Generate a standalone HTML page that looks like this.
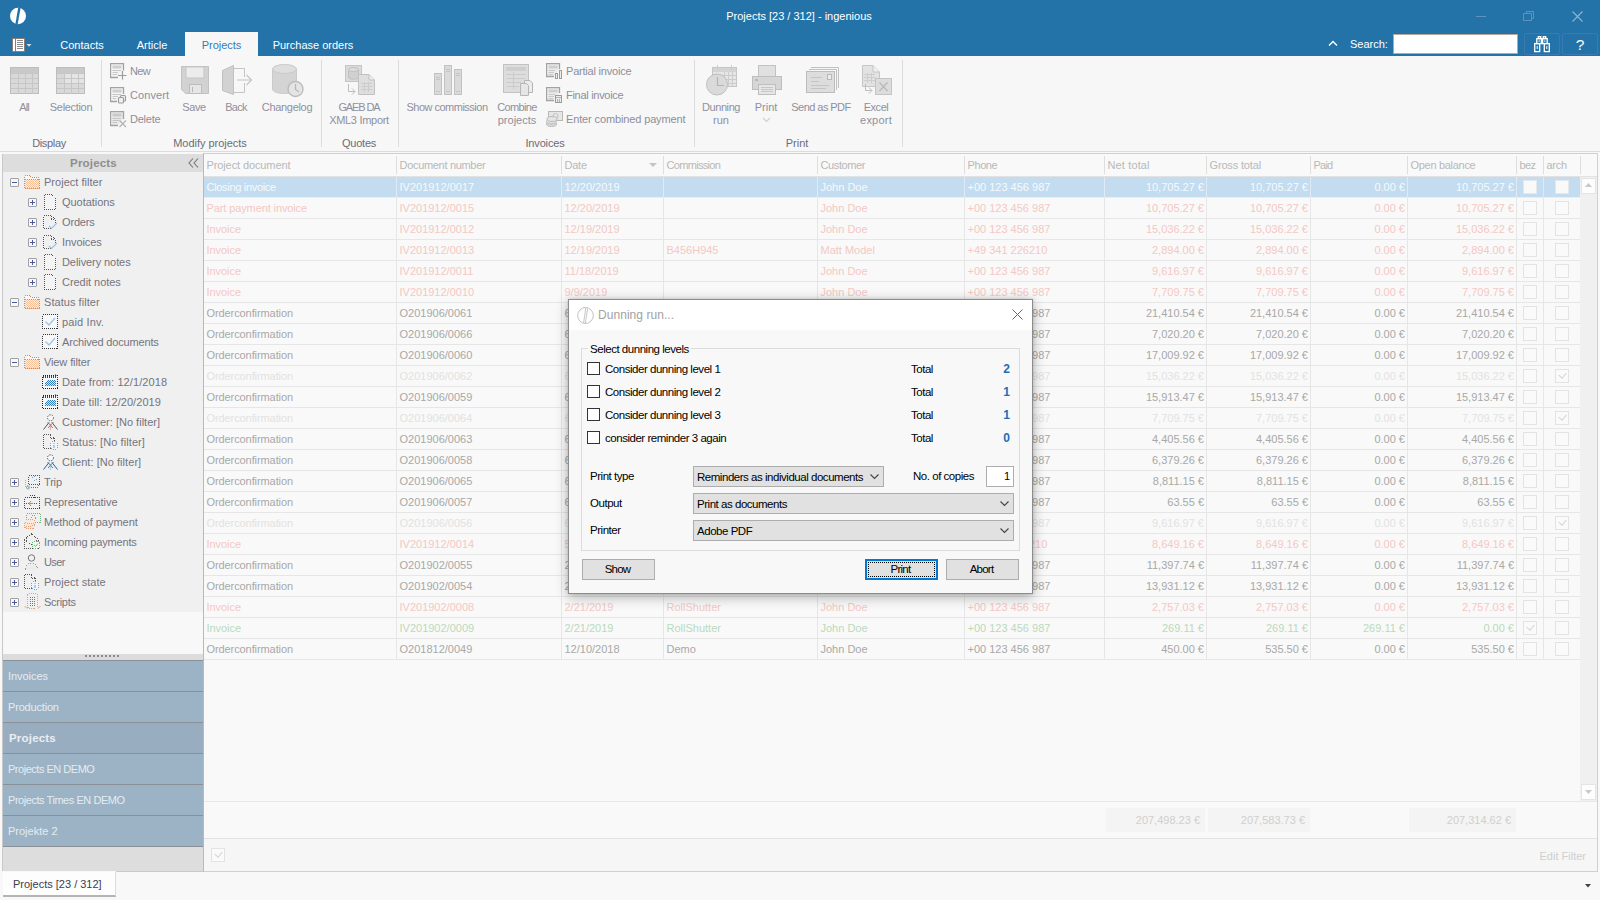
<!DOCTYPE html>
<html><head><meta charset="utf-8"><title>Projects [23 / 312] - ingenious</title>
<style>
*{box-sizing:border-box;margin:0;padding:0}
html,body{width:1600px;height:900px;overflow:hidden;background:#f8f8f8;font-family:"Liberation Sans",sans-serif;font-size:11px;color:#a8a8a8}
.abs{position:absolute}
#top{position:absolute;left:0;top:0;width:1600px;height:56px;background:#2373a9}
#title{position:absolute;left:-1px;width:1600px;top:9px;text-align:center;color:#fff;font-size:11px;line-height:14px;padding-left:-4px}
.tab{position:absolute;top:32px;height:24px;line-height:27px;color:#fff;font-size:11px;text-align:center}
.tab.sel{background:#f7f7f7;color:#2f7cc0}
#ribbon{position:absolute;left:0;top:56px;width:1600px;height:96px;background:#f7f7f7;border-bottom:1px solid #dcdcdc}
.rsep{position:absolute;top:4px;width:1px;height:87px;background:#dcdcdc}
.rlab{position:absolute;top:80px;height:14px;line-height:14px;text-align:center;color:#6c6c78;font-size:11px;white-space:nowrap}
.btxt{position:absolute;text-align:center;color:#90909c;font-size:11px;line-height:13px;white-space:nowrap}
.stxt{position:absolute;color:#8e8e9a;font-size:11px;line-height:13px;white-space:nowrap}
.ico{position:absolute}
#left{position:absolute;left:3px;top:153px;width:200px;height:718px;background:#f8f8f8}
#lbord{position:absolute;left:2px;top:154px;width:1px;height:717px;background:#c8c8c8}
#lhead{position:absolute;left:0;top:1px;width:200px;height:18px;background:#dddddd;color:#8e8e8e;font-weight:bold;font-size:11.5px;line-height:18px;text-align:center;padding-right:19px}
#tree{position:absolute;left:0;top:19px;width:200px;height:440px;background:#f0f0f0}
.ti{position:absolute;left:0;width:200px;height:20px;line-height:20px;color:#74747e;font-size:11px;white-space:nowrap}
.ti span{position:absolute;top:0}
.bx{position:absolute;width:9px;height:9px;border:1px solid #a2a2a6;background:#f8f8f8;border-radius:1px}
.bx:before{content:"";position:absolute;left:1px;top:3px;width:5px;height:1px;background:#4a5aa0}
.bx.p:after{content:"";position:absolute;left:3px;top:1px;width:1px;height:5px;background:#4a5aa0}
.nav{position:absolute;left:0;width:200px;height:31px;background:#9bb3c4;border-top:1px solid #8b9096;color:#e4ecf2;line-height:31px;padding-left:5px;font-size:11px}
.nav.sel{background:#98adbf;font-weight:bold;color:#e8eef4;font-size:11.5px;padding-left:6px}
#grid{position:absolute;left:203px;top:153px;width:1395px;height:719px;border:1px solid #d0d0d0;border-left:1px solid #b9b9b9;background:#f9f9f9}
.hc{position:absolute;top:0;height:23px;line-height:23px;color:#b8b8b8;padding-left:2.5px;white-space:nowrap;overflow:hidden}
.hc:after{content:"";position:absolute;right:0;top:2px;width:1px;height:18px;background:#dedede}
.row{position:absolute;left:0;width:1377px;height:21px;border-bottom:1px solid #e6e6e6}
.row.sel{background:#c3dcf0;color:#f6fafd;border-bottom-color:#ececec}
.c{position:absolute;top:0;height:21px;line-height:21px;padding:0 3px 0 2.5px;border-right:1px solid #e6e6e6;white-space:nowrap;overflow:hidden}
.row.sel .c{border-right-color:#dfeaf4}
.c.r{text-align:right;padding-right:2px}
.red{color:#f4c8c3}.fad{color:#e2e2e2}.grn{color:#b9dabd}
.cb{position:absolute;width:14px;height:14px;border:1px solid #e3e3e3;background:#fafafa;top:3px}
.row.sel .cb{border-color:#e4e8ec;background:#f9f9f9}
.cb.ck:after{content:"";position:absolute;left:3px;top:2px;width:6px;height:4px;border-left:1.5px solid #d2d2d2;border-bottom:1.5px solid #d2d2d2;transform:rotate(-50deg)}
</style></head><body>
<div id="top">
 <svg class="abs" style="left:9px;top:7px" width="18" height="18" viewBox="0 0 18 18"><ellipse cx="9" cy="9" rx="8" ry="8.2" fill="#fff"/><path d="M9.2 0.5 L11.6 0.9 L8.6 17.4 L6.4 17 Z" fill="#2373a9"/></svg>
 <div id="title">Projects [23 / 312] - ingenious</div>
 <svg class="abs" style="left:1476px;top:16px" width="11" height="2"><rect width="10" height="1" y="0" fill="#5b94bd"/></svg>
 <svg class="abs" style="left:1523px;top:11px" width="12" height="11" viewBox="0 0 12 11"><path d="M3.5 2.5 V0.5 H10.5 V7.5 H8.5 M0.5 2.5 H8.5 V9.5 H0.5 Z" fill="none" stroke="#5b94bd" stroke-width="1"/></svg>
 <svg class="abs" style="left:1572px;top:11px" width="11" height="11" viewBox="0 0 11 11"><path d="M0.5 0.5 L10.5 10.5 M10.5 0.5 L0.5 10.5" stroke="#8fb6d3" stroke-width="1.1"/></svg>
 <!-- menu icon -->
 <svg class="abs" style="left:12px;top:38px" width="22" height="14" viewBox="0 0 22 14"><rect x="0.500" y="0.500" width="12" height="13" fill="#fff" stroke="#8a7f78"/><path d="M3.500 1V13" stroke="#8a7f78"/><path d="M5 2.500H11M5 4.500H11M5 6.500H11M5 8.500H11M5 10.500H11" stroke="#8c8c8c"/><path d="M14.500 6H19.500L17 8.700Z" fill="#d6dfe6"/></svg>
 <div class="tab" style="left:50px;width:64px">Contacts</div>
 <div class="tab" style="left:126px;width:52px">Article</div>
 <div class="tab sel" style="left:185px;width:73px">Projects</div>
 <div class="tab" style="left:266px;width:94px">Purchase orders</div>
 <svg class="abs" style="left:1328px;top:40px" width="10" height="7" viewBox="0 0 10 7"><path d="M1 5.5 L5 1.5 L9 5.5" fill="none" stroke="#fff" stroke-width="1.4"/></svg>
 <div class="abs" style="left:1350px;top:37px;color:#fff;line-height:14px">Search:</div>
 <div class="abs" style="left:1393px;top:34px;width:125px;height:20px;background:#fff;border:1px solid #b9a79a"></div>
 <div class="abs" style="left:1524px;top:33px;width:36px;height:22px;border:1px solid #3a79b5;border-radius:2px"></div>
 <div class="abs" style="left:1562px;top:33px;width:36px;height:22px;border:1px solid #3a79b5;border-radius:2px"></div>
 <svg class="abs" style="left:1534px;top:36px" width="16" height="17" viewBox="0 0 16 17"><g fill="none" stroke="#fff" stroke-width="1.300"><rect x="4.300" y="0.600" width="2.400" height="2"/><rect x="9.300" y="0.600" width="2.400" height="2"/><rect x="2.800" y="2.600" width="4.600" height="5"/><rect x="8.600" y="2.600" width="4.600" height="5"/><rect x="0.700" y="7.600" width="5" height="8"/><rect x="10.300" y="7.600" width="5" height="8"/><path d="M7.400 5H8.600"/></g><g fill="#fff"><rect x="4.700" y="4.200" width="0.800" height="1.800"/><rect x="10.500" y="4.200" width="0.800" height="1.800"/><rect x="2.700" y="10" width="1" height="3"/><rect x="12.300" y="10" width="1" height="3"/></g></svg>
 <div class="abs" style="left:1562px;top:35px;width:36px;text-align:center;color:#fff;font-size:15.5px;line-height:20px">?</div>
</div>
<div id="ribbon">
 <!-- Display -->
 <svg class="ico" style="left:10px;top:11px" width="30" height="28" viewBox="0 0 30 28"><rect x="0.5" y="0.5" width="28" height="26" fill="#d9d9d9" stroke="#bdbdbd"/><rect x="1" y="1" width="27" height="5" fill="#c9c9c9"/><path d="M1 6.500H28M1 11.500H28M1 16.500H28M1 21.500H28M8.500 6V27M15.500 6V27M22.500 6V27" stroke="#c6c6c6"/></svg>
 <svg class="ico" style="left:56px;top:11px" width="30" height="28" viewBox="0 0 30 28"><rect x="0.5" y="0.5" width="28" height="26" fill="#d9d9d9" stroke="#bdbdbd"/><rect x="1" y="1" width="27" height="5" fill="#c9c9c9"/><rect x="9" y="7" width="19" height="9" fill="#e4e4e4"/><path d="M1 6.500H28M1 11.500H28M1 16.500H28M1 21.500H28M8.500 6V27M15.500 6V27M22.500 6V27" stroke="#c6c6c6"/></svg>
 <div class="btxt" style="left:4px;width:40px;top:45px"><span style="letter-spacing:-0.96px">All</span></div>
 <div class="btxt" style="left:41px;width:60px;top:45px"><span style="letter-spacing:-0.32px">Selection</span></div>
 <div class="rlab" style="left:19px;width:60px"><span style="letter-spacing:-0.34px">Display</span></div>
 <div class="rsep" style="left:101px"></div>
 <!-- Modify projects small -->
 <svg class="ico" style="left:110px;top:7px" width="17" height="17" viewBox="0 0 17 17"><path d="M8 14.500H0.500V0.500H13.500V7.500" fill="#f2f2f2" stroke="#a2a2a2" stroke-width="1.300"/><rect x="2.500" y="2.500" width="9" height="3" fill="#cfcfcf"/><path d="M2.500 7.500H11M2.500 9.500H8M2.500 11.500H7" stroke="#c8c8c8"/><path d="M8 12.500H16.500M12.500 8V16.500" stroke="#9c9c9c" stroke-width="1.200"/></svg>
 <svg class="ico" style="left:110px;top:31px" width="17" height="17" viewBox="0 0 17 17"><path d="M7 14.500H0.500V0.500H13.500V7" fill="#f2f2f2" stroke="#a2a2a2" stroke-width="1.300"/><rect x="2.500" y="2.500" width="9" height="3" fill="#cfcfcf"/><path d="M2.500 7.500H11M2.500 9.500H8M2.500 11.500H6" stroke="#c8c8c8"/><rect x="10.500" y="8.500" width="5" height="5.500" rx="1" fill="#f0f0f0" stroke="#9c9c9c" stroke-width="1.100"/><rect x="8.500" y="10.500" width="5" height="5.500" rx="1" fill="#f0f0f0" stroke="#9c9c9c" stroke-width="1.100"/></svg>
 <svg class="ico" style="left:110px;top:55px" width="17" height="17" viewBox="0 0 17 17"><path d="M8 14.500H0.500V0.500H13.500V8" fill="#e9e9e9" stroke="#a2a2a2" stroke-width="1.300"/><rect x="2.500" y="2.500" width="9" height="3" fill="#c9c9c9"/><path d="M2.500 7.500H11M2.500 9.500H9M2.500 11.500H7" stroke="#c4c4c4"/><path d="M9.500 9.500L16 16M16 9.500L9.500 16" stroke="#b0b0b0" stroke-width="1.100"/></svg>
 <div class="stxt" style="left:130px;top:9px"><span style="letter-spacing:-0.60px">New</span></div>
 <div class="stxt" style="left:130px;top:33px"><span style="letter-spacing:0.11px">Convert</span></div>
 <div class="stxt" style="left:130px;top:57px"><span style="letter-spacing:-0.22px">Delete</span></div>
 <!-- Save -->
 <svg class="ico" style="left:181px;top:10px" width="29" height="29" viewBox="0 0 29 29"><path d="M0.500 0.500H27.500V27.500H4.500L0.500 23.500Z" fill="#d2d2d2" stroke="#c2c2c2"/><rect x="5" y="1" width="18" height="11" fill="#ececec" stroke="#c6c6c6"/><rect x="8.500" y="18.500" width="12" height="9" fill="#e6e6e6" stroke="#bdbdbd"/><path d="M11.500 21V26" stroke="#b8b8b8"/></svg>
 <div class="btxt" style="left:174px;width:40px;top:45px"><span style="letter-spacing:-0.36px">Save</span></div>
 <!-- Back -->
 <svg class="ico" style="left:221px;top:9px" width="32" height="31" viewBox="0 0 32 31"><path d="M13 3.500H23.500V12M23.500 18V27.500H13" fill="none" stroke="#c4c4c4"/><path d="M1.500 5.500L12.500 0.500V29.500L1.500 25.500Z" fill="#d2d2d2" stroke="#c0c0c0"/><path d="M16 15H30M25.500 10L30.500 15L25.500 20" fill="none" stroke="#c4c4c4" stroke-width="1.2"/></svg>
 <div class="btxt" style="left:216px;width:40px;top:45px"><span style="letter-spacing:-0.72px">Back</span></div>
 <!-- Changelog -->
 <svg class="ico" style="left:272px;top:8px" width="33" height="34" viewBox="0 0 33 34"><path d="M0.500 5V25C0.500 31 24.500 31 24.500 25V5" fill="#d4d4d4" stroke="#cacaca"/><ellipse cx="12.500" cy="5" rx="12" ry="4.500" fill="#dedede" stroke="#cacaca"/><circle cx="23.500" cy="25" r="7.500" fill="#e4e4e4" stroke="#bcbcbc" stroke-width="1.400"/><path d="M23.500 20V25.500L27 28" fill="none" stroke="#b8b8b8" stroke-width="1.200"/></svg>
 <div class="btxt" style="left:257px;width:60px;top:45px"><span style="letter-spacing:-0.31px">Changelog</span></div>
 <div class="rlab" style="left:160px;width:100px"><span style="letter-spacing:-0.03px">Modify projects</span></div>
 <div class="rsep" style="left:321px"></div>
 <!-- Quotes -->
 <svg class="ico" style="left:345px;top:9px" width="31" height="31" viewBox="0 0 31 31"><rect x="0.500" y="0.500" width="16" height="16" fill="#dadada" stroke="#c6c6c6"/><path d="M3.500 4.500V12C3.500 15 13.500 15 13.500 12V4.500" fill="#d0d0d0" stroke="#c0c0c0"/><ellipse cx="8.500" cy="4.500" rx="5" ry="2" fill="#dcdcdc" stroke="#c0c0c0"/><path d="M13.500 9.500H24L29.500 15V29.500H13.500Z" fill="#dedede" stroke="#c2c2c2"/><path d="M24 9.500V15H29.500" fill="#ececec" stroke="#c2c2c2"/><path d="M16 18.500H27M16 21.500H27M16 24.500H27M19.500 17V27M23.500 17V27" stroke="#cccccc"/><path d="M3.500 19V26.500H10M7 23.500L10 26.500L7 29.500" fill="none" stroke="#bdbdbd"/></svg>
 <div class="btxt" style="left:324px;width:70px;top:45px"><span style="letter-spacing:-1.10px">GAEB DA</span><br><span style="letter-spacing:-0.30px">XML3 Import</span></div>
 <div class="rlab" style="left:329px;width:60px"><span style="letter-spacing:-0.21px">Quotes</span></div>
 <div class="rsep" style="left:398px"></div>
 <!-- Invoices -->
 <svg class="ico" style="left:434px;top:9px" width="29" height="30" viewBox="0 0 29 30"><g fill="#dadada" stroke="#c2c2c2"><rect x="0.500" y="8.500" width="7" height="21"/><rect x="10.500" y="0.500" width="7" height="29"/><rect x="20.500" y="4.500" width="7" height="25"/></g><path d="M2 12.500H6M2 14.500H6M2 26.500H6M12 4.500H16M12 6.500H16M12 26.500H16M22 8.500H26M22 10.500H26M22 26.500H26" stroke="#c4c4c4"/></svg>
 <div class="btxt" style="left:398px;width:98px;top:45px"><span style="letter-spacing:-0.51px">Show commission</span></div>
 <svg class="ico" style="left:503px;top:8px" width="31" height="32" viewBox="0 0 31 32"><rect x="0.500" y="0.500" width="25" height="28" fill="#dddddd" stroke="#c2c2c2"/><rect x="3" y="3" width="20" height="4" fill="#cecece"/><path d="M3.500 10.500H22.500M3.500 14.500H22.500M3.500 18.500H18M3.500 22.500H16M10.500 8V25" stroke="#cbcbcb"/><path d="M21.500 16.500H27L29.500 19V28.500H21.500Z" fill="#ececec" stroke="#b6b6b6"/><path d="M17.500 19.500H23.500L25.500 21.500V31.500H17.500Z" fill="#e6e6e6" stroke="#b6b6b6"/></svg>
 <div class="btxt" style="left:492px;width:50px;top:45px"><span style="letter-spacing:-0.67px">Combine</span><br><span style="letter-spacing:-0.00px">projects</span></div>
 <svg class="ico" style="left:546px;top:7px" width="18" height="17" viewBox="0 0 18 17"><path d="M8 13.500H0.500V0.500H13.500V6" fill="#ececec" stroke="#a2a2a2" stroke-width="1.300"/><path d="M2.500 7.500H9M2.500 9.500H8M2.500 11.500H7" stroke="#c8c8c8"/><rect x="2.500" y="2.500" width="9" height="3" fill="#cfcfcf"/><rect x="9.500" y="10.500" width="2" height="5" fill="#eee" stroke="#9c9c9c"/><rect x="13.500" y="7.500" width="2" height="8" fill="#eee" stroke="#9c9c9c"/></svg>
 <svg class="ico" style="left:546px;top:31px" width="18" height="17" viewBox="0 0 18 17"><path d="M8 13.500H0.500V0.500H13.500V6" fill="#ececec" stroke="#a2a2a2" stroke-width="1.300"/><path d="M2.500 7.500H9M2.500 9.500H8M2.500 11.500H7" stroke="#c8c8c8"/><rect x="2.500" y="2.500" width="9" height="3" fill="#cfcfcf"/><rect x="9.500" y="8.500" width="6" height="7" fill="#eee" stroke="#9c9c9c"/><path d="M10 10.500H15M11.500 12V15M13.500 12V15" stroke="#b0b0b0"/></svg>
 <svg class="ico" style="left:546px;top:54px" width="18" height="18" viewBox="0 0 18 18"><rect x="2.500" y="1.500" width="14" height="9" fill="#e6e6e6" stroke="#b8b8b8"/><circle cx="9.500" cy="6" r="2.500" fill="none" stroke="#c2c2c2"/><ellipse cx="5.500" cy="14" rx="5" ry="2.500" fill="#d8d8d8" stroke="#bcbcbc"/><ellipse cx="5.500" cy="11.500" rx="5" ry="2.500" fill="#dedede" stroke="#bcbcbc"/><ellipse cx="6" cy="9" rx="5" ry="2.500" fill="#e4e4e4" stroke="#bcbcbc"/></svg>
 <div class="stxt" style="left:566px;top:9px"><span style="letter-spacing:-0.21px">Partial invoice</span></div>
 <div class="stxt" style="left:566px;top:33px"><span style="letter-spacing:-0.29px">Final invoice</span></div>
 <div class="stxt" style="left:566px;top:57px"><span style="letter-spacing:-0.13px">Enter combined payment</span></div>
 <div class="rlab" style="left:515px;width:60px"><span style="letter-spacing:-0.14px">Invoices</span></div>
 <div class="rsep" style="left:694px"></div>
 <!-- Print group -->
 <svg class="ico" style="left:706px;top:9px" width="32" height="31" viewBox="0 0 32 31"><rect x="6.500" y="2.500" width="24" height="19" fill="#e6e6e6" stroke="#c6c6c6"/><rect x="7" y="3" width="23" height="4" fill="#d4d4d4"/><path d="M11.500 0V5M25.500 0V5M7 10.500H30M7 14.500H30M7 18.500H30M18.500 7V21M22.500 7V21M26.500 7V21" stroke="#cccccc"/><circle cx="11" cy="19.500" r="10.500" fill="#dadada" stroke="#bebebe"/><path d="M11.500 12V20.500H18" fill="none" stroke="#b4b4b4" stroke-width="1.200"/></svg>
 <div class="btxt" style="left:696px;width:50px;top:45px"><span style="letter-spacing:-0.41px">Dunning</span><br>run</div>
 <svg class="ico" style="left:752px;top:9px" width="31" height="31" viewBox="0 0 31 31"><rect x="6.500" y="0.500" width="17" height="11" fill="#e0e0e0" stroke="#c2c2c2"/><rect x="0.500" y="11.500" width="29" height="13" fill="#d6d6d6" stroke="#bebebe"/><rect x="3" y="14" width="3" height="2" fill="#b8b8b8"/><rect x="6.500" y="19.500" width="17" height="10" fill="#e6e6e6" stroke="#bebebe"/><path d="M9 22.500H21M9 24.500H21M9 26.500H21" stroke="#c6c6c6"/></svg>
 <div class="btxt" style="left:746px;width:40px;top:45px">Print</div>
 <svg class="ico" style="left:762px;top:61px" width="9" height="6" viewBox="0 0 9 6"><path d="M1 1L4.500 4.500L8 1" fill="none" stroke="#d0d0d0" stroke-width="1.200"/></svg>
 <svg class="ico" style="left:806px;top:11px" width="34" height="27" viewBox="0 0 34 27"><path d="M5 0.500H32.500V21" fill="none" stroke="#c0c0c0"/><path d="M3 2.500H30.500V23" fill="none" stroke="#c0c0c0"/><rect x="0.500" y="4.500" width="28" height="21" fill="#dddddd" stroke="#bcbcbc"/><rect x="21.500" y="7.500" width="4" height="5" fill="#ececec" stroke="#b8b8b8"/><path d="M5 10.500H16M5 14.500H13M5 18.500H23M5 21.500H20" stroke="#c4c4c4"/></svg>
 <div class="btxt" style="left:786px;width:70px;top:45px"><span style="letter-spacing:-0.55px">Send as PDF</span></div>
 <svg class="ico" style="left:862px;top:9px" width="31" height="31" viewBox="0 0 31 31"><path d="M0.500 0.500H11L17.500 7V21.500H0.500Z" fill="#e2e2e2" stroke="#c6c6c6"/><path d="M11 0.500V7H17.500" fill="#efefef" stroke="#c6c6c6"/><path d="M2 9.500H13M2 12.500H13M2 15.500H13M5.500 8V18M9.500 8V18" stroke="#cdcdcd"/><rect x="13.500" y="13.500" width="16" height="16" fill="#dcdcdc" stroke="#c4c4c4"/><path d="M17.500 17.500L25.500 26M25.500 17.500L17.500 26" stroke="#b9b9b9" stroke-width="1.300"/><path d="M3.500 19V25.500H9.500M7 22.500L10 25.500L7 28.500" fill="none" stroke="#bdbdbd"/></svg>
 <div class="btxt" style="left:851px;width:50px;top:45px"><span style="letter-spacing:-0.47px">Excel</span><br><span style="letter-spacing:0.21px">export</span></div>
 <div class="rlab" style="left:767px;width:60px">Print</div>
 <div class="rsep" style="left:902px"></div>
</div>
<div id="lbord"></div>
<div id="left">
<div id="lhead"><span style="letter-spacing:0.19px">Projects</span></div>
<svg class="abs" style="left:185px;top:5px" width="11" height="10" viewBox="0 0 11 10"><path d="M5 0.500L1 5L5 9.500M10 0.500L6 5L10 9.500" fill="none" stroke="#777" stroke-width="1.100"/></svg>
<div id="tree">
<div class="ti" style="top:0px"><div class="bx" style="left:7px;top:6px"></div><svg class="abs" style="left:21px;top:2px" width="16" height="16" viewBox="0 0 16 16"><defs><pattern id="fd0" width="2" height="2" patternUnits="userSpaceOnUse"><rect width="2" height="2" fill="#fdeee2"/><rect width="1" height="1" fill="#f6c29c"/><rect x="1" y="1" width="1" height="1" fill="#f6c29c"/></pattern></defs><path d="M0.500 6V3.500L2 1.500H6L7.500 3.500H14.500V6" fill="#f8f8f8" stroke="#e08850" stroke-dasharray="1 1" shape-rendering="crispEdges"/><rect x="0.500" y="5.500" width="15" height="9" fill="url(#fd0)" stroke="#e08850" stroke-dasharray="1 1" shape-rendering="crispEdges"/></svg><span style="left:41px"><span style="letter-spacing:0.02px">Project filter</span></span></div>
<div class="ti" style="top:20px"><div class="bx p" style="left:25px;top:6px"></div><svg class="abs" style="left:40px;top:2px" width="16" height="16" viewBox="0 0 16 16"><path d="M1.500 0.500H8.500L12.500 4.500V15.500H1.500Z" fill="#f4f4f4" stroke="#555" stroke-dasharray="1 1" shape-rendering="crispEdges"/></svg><span style="left:59px"><span style="letter-spacing:-0.04px">Quotations</span></span></div>
<div class="ti" style="top:40px"><div class="bx p" style="left:25px;top:6px"></div><svg class="abs" style="left:40px;top:2px" width="16" height="16" viewBox="0 0 16 16"><path d="M0.500 1.500H8L12.500 5.500V9M8 14.500H0.500V1.500M8 1.500V5.500H12" fill="none" stroke="#555" stroke-dasharray="1 1" shape-rendering="crispEdges"/><path d="M6 12L8.500 14.500L14 9" fill="none" stroke="#9cc4e8" stroke-width="1.200"/></svg><span style="left:59px"><span style="letter-spacing:-0.16px">Orders</span></span></div>
<div class="ti" style="top:60px"><div class="bx p" style="left:25px;top:6px"></div><svg class="abs" style="left:40px;top:2px" width="16" height="16" viewBox="0 0 16 16"><path d="M0.500 1.500H8L12.500 5.500V9M8 14.500H0.500V1.500M8 1.500V5.500H12" fill="none" stroke="#555" stroke-dasharray="1 1" shape-rendering="crispEdges"/><path d="M6 12L8.500 14.500L14 9" fill="none" stroke="#9cc4e8" stroke-width="1.200"/></svg><span style="left:59px"><span style="letter-spacing:-0.09px">Invoices</span></span></div>
<div class="ti" style="top:80px"><div class="bx p" style="left:25px;top:6px"></div><svg class="abs" style="left:40px;top:2px" width="16" height="16" viewBox="0 0 16 16"><path d="M1.500 0.500H8.500L12.500 4.500V15.500H1.500Z" fill="#f4f4f4" stroke="#555" stroke-dasharray="1 1" shape-rendering="crispEdges"/></svg><span style="left:59px"><span style="letter-spacing:-0.08px">Delivery notes</span></span></div>
<div class="ti" style="top:100px"><div class="bx p" style="left:25px;top:6px"></div><svg class="abs" style="left:40px;top:2px" width="16" height="16" viewBox="0 0 16 16"><path d="M1.500 0.500H8.500L12.500 4.500V15.500H1.500Z" fill="#f4f4f4" stroke="#555" stroke-dasharray="1 1" shape-rendering="crispEdges"/></svg><span style="left:59px"><span style="letter-spacing:-0.04px">Credit notes</span></span></div>
<div class="ti" style="top:120px"><div class="bx" style="left:7px;top:6px"></div><svg class="abs" style="left:21px;top:2px" width="16" height="16" viewBox="0 0 16 16"><defs><pattern id="fd6" width="2" height="2" patternUnits="userSpaceOnUse"><rect width="2" height="2" fill="#fdeee2"/><rect width="1" height="1" fill="#f6c29c"/><rect x="1" y="1" width="1" height="1" fill="#f6c29c"/></pattern></defs><path d="M0.500 6V3.500L2 1.500H6L7.500 3.500H14.500V6" fill="#f8f8f8" stroke="#e08850" stroke-dasharray="1 1" shape-rendering="crispEdges"/><rect x="0.500" y="5.500" width="15" height="9" fill="url(#fd6)" stroke="#e08850" stroke-dasharray="1 1" shape-rendering="crispEdges"/></svg><span style="left:41px"><span style="letter-spacing:0.05px">Status filter</span></span></div>
<div class="ti" style="top:140px"><svg class="abs" style="left:39px;top:2px" width="16" height="16" viewBox="0 0 16 16"><rect x="0.500" y="0.500" width="15" height="14" fill="#f8f8f8" stroke="#333" stroke-dasharray="1 1" shape-rendering="crispEdges"/><path d="M3.500 7.500L7 11L13 4" fill="none" stroke="#9cc4e8" stroke-width="1.300"/></svg><span style="left:59px"><span style="letter-spacing:0.14px">paid Inv.</span></span></div>
<div class="ti" style="top:160px"><svg class="abs" style="left:39px;top:2px" width="16" height="16" viewBox="0 0 16 16"><rect x="0.500" y="0.500" width="15" height="14" fill="#f8f8f8" stroke="#333" stroke-dasharray="1 1" shape-rendering="crispEdges"/><path d="M3.500 7.500L7 11L13 4" fill="none" stroke="#9cc4e8" stroke-width="1.300"/></svg><span style="left:59px"><span style="letter-spacing:-0.17px">Archived documents</span></span></div>
<div class="ti" style="top:180px"><div class="bx" style="left:7px;top:6px"></div><svg class="abs" style="left:21px;top:2px" width="16" height="16" viewBox="0 0 16 16"><defs><pattern id="fd9" width="2" height="2" patternUnits="userSpaceOnUse"><rect width="2" height="2" fill="#fdeee2"/><rect width="1" height="1" fill="#f6c29c"/><rect x="1" y="1" width="1" height="1" fill="#f6c29c"/></pattern></defs><path d="M0.500 6V3.500L2 1.500H6L7.500 3.500H14.500V6" fill="#f8f8f8" stroke="#e08850" stroke-dasharray="1 1" shape-rendering="crispEdges"/><rect x="0.500" y="5.500" width="15" height="9" fill="url(#fd9)" stroke="#e08850" stroke-dasharray="1 1" shape-rendering="crispEdges"/></svg><span style="left:41px"><span style="letter-spacing:-0.11px">View filter</span></span></div>
<div class="ti" style="top:200px"><svg class="abs" style="left:39px;top:2px" width="17" height="16" viewBox="0 0 17 16"><defs><pattern id="bd10" width="2" height="2" patternUnits="userSpaceOnUse"><rect width="2" height="2" fill="#dce8f2"/><rect width="1" height="1" fill="#2f7fc0"/><rect x="1" y="1" width="1" height="1" fill="#2f7fc0"/></pattern></defs><rect x="0.500" y="1.500" width="15" height="13" fill="#f6f6f6" stroke="#222" stroke-dasharray="1 1" shape-rendering="crispEdges"/><path d="M1 2.500H15M1 3.500H16" stroke="#444" stroke-dasharray="1 1" shape-rendering="crispEdges"/><path d="M13 0.500L14.500 1.500" stroke="#555"/><rect x="5" y="6" width="9" height="6" fill="url(#bd10)"/><rect x="3" y="8" width="2" height="4" fill="url(#bd10)"/></svg><span style="left:59px"><span style="letter-spacing:0.09px">Date from: 12/1/2018</span></span></div>
<div class="ti" style="top:220px"><svg class="abs" style="left:39px;top:2px" width="17" height="16" viewBox="0 0 17 16"><defs><pattern id="bd11" width="2" height="2" patternUnits="userSpaceOnUse"><rect width="2" height="2" fill="#dce8f2"/><rect width="1" height="1" fill="#2f7fc0"/><rect x="1" y="1" width="1" height="1" fill="#2f7fc0"/></pattern></defs><rect x="0.500" y="1.500" width="15" height="13" fill="#f6f6f6" stroke="#222" stroke-dasharray="1 1" shape-rendering="crispEdges"/><path d="M1 2.500H15M1 3.500H16" stroke="#444" stroke-dasharray="1 1" shape-rendering="crispEdges"/><path d="M13 0.500L14.500 1.500" stroke="#555"/><rect x="5" y="6" width="9" height="6" fill="url(#bd11)"/><rect x="3" y="8" width="2" height="4" fill="url(#bd11)"/></svg><span style="left:59px"><span style="letter-spacing:0.05px">Date till: 12/20/2019</span></span></div>
<div class="ti" style="top:240px"><svg class="abs" style="left:40px;top:2px" width="16" height="16" viewBox="0 0 16 16"><circle cx="7.500" cy="3.800" r="3" fill="#f8f8f8" stroke="#666" stroke-dasharray="1.500 1"/><path d="M0.500 15.500L6 8.500M14.500 15.500L9 8.500" fill="none" stroke="#555" stroke-width="1"/><path d="M4.500 8L10 14M10.500 8L5 14" stroke="#777" stroke-width="0.900"/><path d="M7.500 10.500V15.500" stroke="#e46a6a" stroke-width="1.200" stroke-dasharray="1 1"/></svg><span style="left:59px"><span style="letter-spacing:0.01px">Customer: [No filter]</span></span></div>
<div class="ti" style="top:260px"><svg class="abs" style="left:40px;top:2px" width="16" height="16" viewBox="0 0 16 16"><path d="M8 14.500H0.500V0.500H7.500L11.500 4.500V7" fill="none" stroke="#555" stroke-dasharray="1 1" shape-rendering="crispEdges"/><path d="M7.500 0.500V4.500H11.500" fill="none" stroke="#555" stroke-dasharray="1 1" shape-rendering="crispEdges"/><circle cx="11" cy="11.500" r="4" fill="#f0f6fc" stroke="#6aa6d8" stroke-dasharray="1 1" shape-rendering="crispEdges"/><path d="M11 9V10M11 11V14" stroke="#6aa6d8"/></svg><span style="left:59px"><span style="letter-spacing:0.09px">Status: [No filter]</span></span></div>
<div class="ti" style="top:280px"><svg class="abs" style="left:40px;top:2px" width="16" height="16" viewBox="0 0 16 16"><circle cx="7.500" cy="3.800" r="3" fill="#f8f8f8" stroke="#557" stroke-dasharray="1.500 1"/><path d="M0.500 15.500L6 8.500M14.500 15.500L9 8.500" fill="none" stroke="#2f5fa0" stroke-width="1"/><path d="M4.500 8L10 14M10.500 8L5 14" stroke="#4a6a90" stroke-width="0.900"/><path d="M7.500 10.500V15.500" stroke="#5ab8dc" stroke-width="1.200" stroke-dasharray="1 1"/></svg><span style="left:59px"><span style="letter-spacing:0.05px">Client: [No filter]</span></span></div>
<div class="ti" style="top:300px"><div class="bx p" style="left:7px;top:6px"></div><svg class="abs" style="left:21px;top:2px" width="17" height="16" viewBox="0 0 17 16"><rect x="4.500" y="1.500" width="11" height="9" fill="none" stroke="#555" stroke-dasharray="1 1" shape-rendering="crispEdges"/><path d="M8 4C9 2.500 11 2.500 12 4C13 5.500 11.500 7 10 7" fill="none" stroke="#6aa6d8" stroke-dasharray="1 1" shape-rendering="crispEdges"/><path d="M1.500 6V13.500H6M2 13.500L5 10" stroke="#9ab6cc" stroke-dasharray="1 1" shape-rendering="crispEdges" fill="none"/><path d="M7 13.500H13L16 10.500" fill="none" stroke="#777" stroke-dasharray="1 1" shape-rendering="crispEdges"/><circle cx="4" cy="13.500" r="1.500" fill="none" stroke="#8aa"/></svg><span style="left:41px"><span style="letter-spacing:-0.18px">Trip</span></span></div>
<div class="ti" style="top:320px"><div class="bx p" style="left:7px;top:6px"></div><svg class="abs" style="left:21px;top:2px" width="16" height="16" viewBox="0 0 16 16"><rect x="0.500" y="3.500" width="15" height="11" fill="none" stroke="#444" stroke-dasharray="1 1" shape-rendering="crispEdges"/><path d="M5.500 3.500V1.500H10.500V3.500" fill="none" stroke="#444" stroke-dasharray="1 1" shape-rendering="crispEdges"/><path d="M2 9.500H14" stroke="#555" stroke-dasharray="1 1" shape-rendering="crispEdges"/><path d="M7 7L5 9.500L7 12" fill="none" stroke="#e07848"/><path d="M5.500 9.500H9" stroke="#e07848"/></svg><span style="left:41px"><span style="letter-spacing:-0.03px">Representative</span></span></div>
<div class="ti" style="top:340px"><div class="bx p" style="left:7px;top:6px"></div><svg class="abs" style="left:21px;top:1px" width="17" height="17" viewBox="0 0 17 17"><rect x="2.500" y="0.500" width="14" height="9" fill="none" stroke="#6ab87a" stroke-dasharray="1 1" shape-rendering="crispEdges"/><circle cx="9.500" cy="5" r="2.500" fill="none" stroke="#6ab87a" stroke-dasharray="1 1" shape-rendering="crispEdges"/><ellipse cx="5.500" cy="13.500" rx="5" ry="2.500" fill="#fce8d8" stroke="#eaa070" stroke-dasharray="1 1" shape-rendering="crispEdges"/><ellipse cx="5.500" cy="11" rx="5" ry="2.500" fill="#fce8d8" stroke="#eaa070" stroke-dasharray="1 1" shape-rendering="crispEdges"/><ellipse cx="6" cy="8.500" rx="5" ry="2.500" fill="#fce8d8" stroke="#eaa070" stroke-dasharray="1 1" shape-rendering="crispEdges"/></svg><span style="left:41px"><span style="letter-spacing:-0.02px">Method of payment</span></span></div>
<div class="ti" style="top:360px"><div class="bx p" style="left:7px;top:6px"></div><svg class="abs" style="left:21px;top:1px" width="17" height="17" viewBox="0 0 17 17"><path d="M0.500 6.500L7.500 1L14.500 6.500V15.500H0.500Z" fill="none" stroke="#555" stroke-dasharray="1 1" shape-rendering="crispEdges"/><path d="M0.500 6.500L7.500 11.500L14.500 6.500" fill="none" stroke="#555" stroke-dasharray="1 1" shape-rendering="crispEdges"/><circle cx="12" cy="12" r="4" fill="#f2f9f3" stroke="#6ab87a" stroke-dasharray="1 1" shape-rendering="crispEdges"/><path d="M10 12L11.500 13.500L14 10.500" fill="none" stroke="#6ab87a"/></svg><span style="left:41px"><span style="letter-spacing:-0.16px">Incoming payments</span></span></div>
<div class="ti" style="top:380px"><div class="bx p" style="left:7px;top:6px"></div><svg class="abs" style="left:21px;top:2px" width="16" height="16" viewBox="0 0 16 16"><circle cx="7.500" cy="4" r="3.200" fill="none" stroke="#777"/><path d="M1 15.500C2.500 10 5 9 7.500 9C10 9 12.500 10 14 15.500" fill="#ececec" stroke="#999" stroke-dasharray="1 1" shape-rendering="crispEdges"/></svg><span style="left:41px"><span style="letter-spacing:-0.61px">User</span></span></div>
<div class="ti" style="top:400px"><div class="bx p" style="left:7px;top:6px"></div><svg class="abs" style="left:21px;top:2px" width="16" height="16" viewBox="0 0 16 16"><path d="M8 14.500H0.500V0.500H7.500L11.500 4.500V7" fill="none" stroke="#555" stroke-dasharray="1 1" shape-rendering="crispEdges"/><path d="M7.500 0.500V4.500H11.500" fill="none" stroke="#555" stroke-dasharray="1 1" shape-rendering="crispEdges"/><circle cx="11" cy="11.500" r="4" fill="#f0f6fc" stroke="#6aa6d8" stroke-dasharray="1 1" shape-rendering="crispEdges"/><path d="M11 9V10M11 11V14" stroke="#6aa6d8"/></svg><span style="left:41px"><span style="letter-spacing:0.05px">Project state</span></span></div>
<div class="ti" style="top:420px"><div class="bx p" style="left:7px;top:6px"></div><svg class="abs" style="left:21px;top:1px" width="17" height="17" viewBox="0 0 17 17"><path d="M3.500 2C5 0 12 0 13.500 2V14C12 16 5 16 3.500 14Z" fill="none" stroke="#eaa070" stroke-dasharray="1 1" shape-rendering="crispEdges"/><path d="M5.500 4H11.500M5.500 6H11.500M5.500 8H11.500M5.500 10H11.500M5.500 12H11.500" stroke="#777" stroke-dasharray="1 1" shape-rendering="crispEdges"/><path d="M0.500 13L3 15.500M16.500 13L14 15.500" stroke="#eaa070"/></svg><span style="left:41px"><span style="letter-spacing:-0.27px">Scripts</span></span></div>
</div>
<div class="abs" style="left:0;top:501px;width:200px;height:7px;background:#dcdcdc"></div>
<div class="abs" style="left:82px;top:502px;width:35px;height:2px;background:repeating-linear-gradient(90deg,#8c8c98 0 2px,transparent 2px 4px)"></div>
<div class="nav" style="top:507px"><span style="letter-spacing:-0.05px">Invoices</span></div>
<div class="nav" style="top:538px"><span style="letter-spacing:-0.18px">Production</span></div>
<div class="nav sel" style="top:569px"><span style="letter-spacing:0.19px">Projects</span></div>
<div class="nav" style="top:600px"><span style="letter-spacing:-0.48px">Projects EN DEMO</span></div>
<div class="nav" style="top:631px"><span style="letter-spacing:-0.45px">Projects Times EN DEMO</span></div>
<div class="nav" style="top:662px"><span style="letter-spacing:-0.00px">Projekte 2</span></div>
<div class="abs" style="left:0;top:693px;width:200px;height:25px;background:#dddddd;border-top:1px solid #8b9096"></div>
<div class="abs" style="left:113px;top:718px;width:88px;height:1px;background:#c9c9c9"></div>
</div>
<div id="grid">
<div class="hc" style="left:0px;width:193px"><span style="letter-spacing:-0.11px">Project document</span></div>
<div class="hc" style="left:193px;width:165px"><span style="letter-spacing:-0.31px">Document number</span></div>
<div class="hc" style="left:358px;width:102px"><span style="letter-spacing:-0.24px">Date</span></div>
<div class="hc" style="left:460px;width:154px"><span style="letter-spacing:-0.68px">Commission</span></div>
<div class="hc" style="left:614px;width:147px"><span style="letter-spacing:-0.38px">Customer</span></div>
<div class="hc" style="left:761px;width:140px"><span style="letter-spacing:-0.40px">Phone</span></div>
<div class="hc" style="left:901px;width:102px"><span style="letter-spacing:0.13px">Net total</span></div>
<div class="hc" style="left:1003px;width:104px"><span style="letter-spacing:-0.16px">Gross total</span></div>
<div class="hc" style="left:1107px;width:97px"><span style="letter-spacing:-0.77px">Paid</span></div>
<div class="hc" style="left:1204px;width:109px"><span style="letter-spacing:-0.30px">Open balance</span></div>
<div class="hc" style="left:1313px;width:27px"><span style="letter-spacing:-0.57px">bez</span></div>
<div class="hc" style="left:1340px;width:37px"><span style="letter-spacing:-0.27px">arch</span></div>

<div class="abs" style="left:0;top:22px;width:1393px;height:1px;background:#e2e2e2"></div>
<svg class="abs" style="left:445px;top:9px" width="9" height="5"><path d="M0 0H8L4 4Z" fill="#c4c4c4"/></svg>
<div class="row sel" style="top:23px"><div class="c" style="left:0px;width:193px"><span style="letter-spacing:-0.31px">Closing invoice</span></div><div class="c" style="left:193px;width:165px">IV201912/0017</div><div class="c" style="left:358px;width:102px">12/20/2019</div><div class="c" style="left:460px;width:154px"></div><div class="c" style="left:614px;width:147px">John Doe</div><div class="c" style="left:761px;width:140px">+00 123 456 987</div><div class="c r" style="left:901px;width:102px">10,705.27 €</div><div class="c r" style="left:1003px;width:104px">10,705.27 €</div><div class="c r" style="left:1107px;width:97px">0.00 €</div><div class="c r" style="left:1204px;width:109px">10,705.27 €</div><div class="c" style="left:1313px;width:27px"><div class="cb" style="left:6px"></div></div><div class="c" style="left:1340px;width:37px"><div class="cb" style="left:11px"></div></div></div>
<div class="row red" style="top:44px"><div class="c" style="left:0px;width:193px"><span style="letter-spacing:-0.11px">Part payment invoice</span></div><div class="c" style="left:193px;width:165px">IV201912/0015</div><div class="c" style="left:358px;width:102px">12/20/2019</div><div class="c" style="left:460px;width:154px"></div><div class="c" style="left:614px;width:147px">John Doe</div><div class="c" style="left:761px;width:140px">+00 123 456 987</div><div class="c r" style="left:901px;width:102px">10,705.27 €</div><div class="c r" style="left:1003px;width:104px">10,705.27 €</div><div class="c r" style="left:1107px;width:97px">0.00 €</div><div class="c r" style="left:1204px;width:109px">10,705.27 €</div><div class="c" style="left:1313px;width:27px"><div class="cb" style="left:6px"></div></div><div class="c" style="left:1340px;width:37px"><div class="cb" style="left:11px"></div></div></div>
<div class="row red" style="top:65px"><div class="c" style="left:0px;width:193px"><span style="letter-spacing:-0.06px">Invoice</span></div><div class="c" style="left:193px;width:165px">IV201912/0012</div><div class="c" style="left:358px;width:102px">12/19/2019</div><div class="c" style="left:460px;width:154px"></div><div class="c" style="left:614px;width:147px">John Doe</div><div class="c" style="left:761px;width:140px">+00 123 456 987</div><div class="c r" style="left:901px;width:102px">15,036.22 €</div><div class="c r" style="left:1003px;width:104px">15,036.22 €</div><div class="c r" style="left:1107px;width:97px">0.00 €</div><div class="c r" style="left:1204px;width:109px">15,036.22 €</div><div class="c" style="left:1313px;width:27px"><div class="cb" style="left:6px"></div></div><div class="c" style="left:1340px;width:37px"><div class="cb" style="left:11px"></div></div></div>
<div class="row red" style="top:86px"><div class="c" style="left:0px;width:193px"><span style="letter-spacing:-0.06px">Invoice</span></div><div class="c" style="left:193px;width:165px">IV201912/0013</div><div class="c" style="left:358px;width:102px">12/19/2019</div><div class="c" style="left:460px;width:154px">B456H945</div><div class="c" style="left:614px;width:147px">Matt Model</div><div class="c" style="left:761px;width:140px">+49 341 226210</div><div class="c r" style="left:901px;width:102px">2,894.00 €</div><div class="c r" style="left:1003px;width:104px">2,894.00 €</div><div class="c r" style="left:1107px;width:97px">0.00 €</div><div class="c r" style="left:1204px;width:109px">2,894.00 €</div><div class="c" style="left:1313px;width:27px"><div class="cb" style="left:6px"></div></div><div class="c" style="left:1340px;width:37px"><div class="cb" style="left:11px"></div></div></div>
<div class="row red" style="top:107px"><div class="c" style="left:0px;width:193px"><span style="letter-spacing:-0.06px">Invoice</span></div><div class="c" style="left:193px;width:165px">IV201912/0011</div><div class="c" style="left:358px;width:102px">11/18/2019</div><div class="c" style="left:460px;width:154px"></div><div class="c" style="left:614px;width:147px">John Doe</div><div class="c" style="left:761px;width:140px">+00 123 456 987</div><div class="c r" style="left:901px;width:102px">9,616.97 €</div><div class="c r" style="left:1003px;width:104px">9,616.97 €</div><div class="c r" style="left:1107px;width:97px">0.00 €</div><div class="c r" style="left:1204px;width:109px">9,616.97 €</div><div class="c" style="left:1313px;width:27px"><div class="cb" style="left:6px"></div></div><div class="c" style="left:1340px;width:37px"><div class="cb" style="left:11px"></div></div></div>
<div class="row red" style="top:128px"><div class="c" style="left:0px;width:193px"><span style="letter-spacing:-0.06px">Invoice</span></div><div class="c" style="left:193px;width:165px">IV201912/0010</div><div class="c" style="left:358px;width:102px">9/9/2019</div><div class="c" style="left:460px;width:154px"></div><div class="c" style="left:614px;width:147px">John Doe</div><div class="c" style="left:761px;width:140px">+00 123 456 987</div><div class="c r" style="left:901px;width:102px">7,709.75 €</div><div class="c r" style="left:1003px;width:104px">7,709.75 €</div><div class="c r" style="left:1107px;width:97px">0.00 €</div><div class="c r" style="left:1204px;width:109px">7,709.75 €</div><div class="c" style="left:1313px;width:27px"><div class="cb" style="left:6px"></div></div><div class="c" style="left:1340px;width:37px"><div class="cb" style="left:11px"></div></div></div>
<div class="row " style="top:149px"><div class="c" style="left:0px;width:193px"><span style="letter-spacing:-0.09px">Orderconfirmation</span></div><div class="c" style="left:193px;width:165px">O201906/0061</div><div class="c" style="left:358px;width:102px">6/28/2019</div><div class="c" style="left:460px;width:154px"></div><div class="c" style="left:614px;width:147px">John Doe</div><div class="c" style="left:761px;width:140px">+00 123 456 987</div><div class="c r" style="left:901px;width:102px">21,410.54 €</div><div class="c r" style="left:1003px;width:104px">21,410.54 €</div><div class="c r" style="left:1107px;width:97px">0.00 €</div><div class="c r" style="left:1204px;width:109px">21,410.54 €</div><div class="c" style="left:1313px;width:27px"><div class="cb" style="left:6px"></div></div><div class="c" style="left:1340px;width:37px"><div class="cb" style="left:11px"></div></div></div>
<div class="row " style="top:170px"><div class="c" style="left:0px;width:193px"><span style="letter-spacing:-0.09px">Orderconfirmation</span></div><div class="c" style="left:193px;width:165px">O201906/0066</div><div class="c" style="left:358px;width:102px">6/28/2019</div><div class="c" style="left:460px;width:154px"></div><div class="c" style="left:614px;width:147px">John Doe</div><div class="c" style="left:761px;width:140px">+00 123 456 987</div><div class="c r" style="left:901px;width:102px">7,020.20 €</div><div class="c r" style="left:1003px;width:104px">7,020.20 €</div><div class="c r" style="left:1107px;width:97px">0.00 €</div><div class="c r" style="left:1204px;width:109px">7,020.20 €</div><div class="c" style="left:1313px;width:27px"><div class="cb" style="left:6px"></div></div><div class="c" style="left:1340px;width:37px"><div class="cb" style="left:11px"></div></div></div>
<div class="row " style="top:191px"><div class="c" style="left:0px;width:193px"><span style="letter-spacing:-0.09px">Orderconfirmation</span></div><div class="c" style="left:193px;width:165px">O201906/0060</div><div class="c" style="left:358px;width:102px">6/27/2019</div><div class="c" style="left:460px;width:154px"></div><div class="c" style="left:614px;width:147px">John Doe</div><div class="c" style="left:761px;width:140px">+00 123 456 987</div><div class="c r" style="left:901px;width:102px">17,009.92 €</div><div class="c r" style="left:1003px;width:104px">17,009.92 €</div><div class="c r" style="left:1107px;width:97px">0.00 €</div><div class="c r" style="left:1204px;width:109px">17,009.92 €</div><div class="c" style="left:1313px;width:27px"><div class="cb" style="left:6px"></div></div><div class="c" style="left:1340px;width:37px"><div class="cb" style="left:11px"></div></div></div>
<div class="row fad" style="top:212px"><div class="c" style="left:0px;width:193px"><span style="letter-spacing:-0.09px">Orderconfirmation</span></div><div class="c" style="left:193px;width:165px">O201906/0062</div><div class="c" style="left:358px;width:102px">6/27/2019</div><div class="c" style="left:460px;width:154px"></div><div class="c" style="left:614px;width:147px">John Doe</div><div class="c" style="left:761px;width:140px">+00 123 456 987</div><div class="c r" style="left:901px;width:102px">15,036.22 €</div><div class="c r" style="left:1003px;width:104px">15,036.22 €</div><div class="c r" style="left:1107px;width:97px">0.00 €</div><div class="c r" style="left:1204px;width:109px">15,036.22 €</div><div class="c" style="left:1313px;width:27px"><div class="cb" style="left:6px"></div></div><div class="c" style="left:1340px;width:37px"><div class="cb ck" style="left:11px"></div></div></div>
<div class="row " style="top:233px"><div class="c" style="left:0px;width:193px"><span style="letter-spacing:-0.09px">Orderconfirmation</span></div><div class="c" style="left:193px;width:165px">O201906/0059</div><div class="c" style="left:358px;width:102px">6/26/2019</div><div class="c" style="left:460px;width:154px"></div><div class="c" style="left:614px;width:147px">John Doe</div><div class="c" style="left:761px;width:140px">+00 123 456 987</div><div class="c r" style="left:901px;width:102px">15,913.47 €</div><div class="c r" style="left:1003px;width:104px">15,913.47 €</div><div class="c r" style="left:1107px;width:97px">0.00 €</div><div class="c r" style="left:1204px;width:109px">15,913.47 €</div><div class="c" style="left:1313px;width:27px"><div class="cb" style="left:6px"></div></div><div class="c" style="left:1340px;width:37px"><div class="cb" style="left:11px"></div></div></div>
<div class="row fad" style="top:254px"><div class="c" style="left:0px;width:193px"><span style="letter-spacing:-0.09px">Orderconfirmation</span></div><div class="c" style="left:193px;width:165px">O201906/0064</div><div class="c" style="left:358px;width:102px">6/26/2019</div><div class="c" style="left:460px;width:154px"></div><div class="c" style="left:614px;width:147px">John Doe</div><div class="c" style="left:761px;width:140px">+00 123 456 987</div><div class="c r" style="left:901px;width:102px">7,709.75 €</div><div class="c r" style="left:1003px;width:104px">7,709.75 €</div><div class="c r" style="left:1107px;width:97px">0.00 €</div><div class="c r" style="left:1204px;width:109px">7,709.75 €</div><div class="c" style="left:1313px;width:27px"><div class="cb" style="left:6px"></div></div><div class="c" style="left:1340px;width:37px"><div class="cb ck" style="left:11px"></div></div></div>
<div class="row " style="top:275px"><div class="c" style="left:0px;width:193px"><span style="letter-spacing:-0.09px">Orderconfirmation</span></div><div class="c" style="left:193px;width:165px">O201906/0063</div><div class="c" style="left:358px;width:102px">6/25/2019</div><div class="c" style="left:460px;width:154px"></div><div class="c" style="left:614px;width:147px">John Doe</div><div class="c" style="left:761px;width:140px">+00 123 456 987</div><div class="c r" style="left:901px;width:102px">4,405.56 €</div><div class="c r" style="left:1003px;width:104px">4,405.56 €</div><div class="c r" style="left:1107px;width:97px">0.00 €</div><div class="c r" style="left:1204px;width:109px">4,405.56 €</div><div class="c" style="left:1313px;width:27px"><div class="cb" style="left:6px"></div></div><div class="c" style="left:1340px;width:37px"><div class="cb" style="left:11px"></div></div></div>
<div class="row " style="top:296px"><div class="c" style="left:0px;width:193px"><span style="letter-spacing:-0.09px">Orderconfirmation</span></div><div class="c" style="left:193px;width:165px">O201906/0058</div><div class="c" style="left:358px;width:102px">6/25/2019</div><div class="c" style="left:460px;width:154px"></div><div class="c" style="left:614px;width:147px">John Doe</div><div class="c" style="left:761px;width:140px">+00 123 456 987</div><div class="c r" style="left:901px;width:102px">6,379.26 €</div><div class="c r" style="left:1003px;width:104px">6,379.26 €</div><div class="c r" style="left:1107px;width:97px">0.00 €</div><div class="c r" style="left:1204px;width:109px">6,379.26 €</div><div class="c" style="left:1313px;width:27px"><div class="cb" style="left:6px"></div></div><div class="c" style="left:1340px;width:37px"><div class="cb" style="left:11px"></div></div></div>
<div class="row " style="top:317px"><div class="c" style="left:0px;width:193px"><span style="letter-spacing:-0.09px">Orderconfirmation</span></div><div class="c" style="left:193px;width:165px">O201906/0065</div><div class="c" style="left:358px;width:102px">6/24/2019</div><div class="c" style="left:460px;width:154px"></div><div class="c" style="left:614px;width:147px">John Doe</div><div class="c" style="left:761px;width:140px">+00 123 456 987</div><div class="c r" style="left:901px;width:102px">8,811.15 €</div><div class="c r" style="left:1003px;width:104px">8,811.15 €</div><div class="c r" style="left:1107px;width:97px">0.00 €</div><div class="c r" style="left:1204px;width:109px">8,811.15 €</div><div class="c" style="left:1313px;width:27px"><div class="cb" style="left:6px"></div></div><div class="c" style="left:1340px;width:37px"><div class="cb" style="left:11px"></div></div></div>
<div class="row " style="top:338px"><div class="c" style="left:0px;width:193px"><span style="letter-spacing:-0.09px">Orderconfirmation</span></div><div class="c" style="left:193px;width:165px">O201906/0057</div><div class="c" style="left:358px;width:102px">6/24/2019</div><div class="c" style="left:460px;width:154px"></div><div class="c" style="left:614px;width:147px">John Doe</div><div class="c" style="left:761px;width:140px">+00 123 456 987</div><div class="c r" style="left:901px;width:102px">63.55 €</div><div class="c r" style="left:1003px;width:104px">63.55 €</div><div class="c r" style="left:1107px;width:97px">0.00 €</div><div class="c r" style="left:1204px;width:109px">63.55 €</div><div class="c" style="left:1313px;width:27px"><div class="cb" style="left:6px"></div></div><div class="c" style="left:1340px;width:37px"><div class="cb" style="left:11px"></div></div></div>
<div class="row fad" style="top:359px"><div class="c" style="left:0px;width:193px"><span style="letter-spacing:-0.09px">Orderconfirmation</span></div><div class="c" style="left:193px;width:165px">O201906/0056</div><div class="c" style="left:358px;width:102px">6/21/2019</div><div class="c" style="left:460px;width:154px"></div><div class="c" style="left:614px;width:147px">John Doe</div><div class="c" style="left:761px;width:140px">+00 123 456 987</div><div class="c r" style="left:901px;width:102px">9,616.97 €</div><div class="c r" style="left:1003px;width:104px">9,616.97 €</div><div class="c r" style="left:1107px;width:97px">0.00 €</div><div class="c r" style="left:1204px;width:109px">9,616.97 €</div><div class="c" style="left:1313px;width:27px"><div class="cb" style="left:6px"></div></div><div class="c" style="left:1340px;width:37px"><div class="cb ck" style="left:11px"></div></div></div>
<div class="row red" style="top:380px"><div class="c" style="left:0px;width:193px"><span style="letter-spacing:-0.06px">Invoice</span></div><div class="c" style="left:193px;width:165px">IV201912/0014</div><div class="c" style="left:358px;width:102px">5/17/2019</div><div class="c" style="left:460px;width:154px"></div><div class="c" style="left:614px;width:147px">Matt Model</div><div class="c" style="left:761px;width:140px">+49 341 226210</div><div class="c r" style="left:901px;width:102px">8,649.16 €</div><div class="c r" style="left:1003px;width:104px">8,649.16 €</div><div class="c r" style="left:1107px;width:97px">0.00 €</div><div class="c r" style="left:1204px;width:109px">8,649.16 €</div><div class="c" style="left:1313px;width:27px"><div class="cb" style="left:6px"></div></div><div class="c" style="left:1340px;width:37px"><div class="cb" style="left:11px"></div></div></div>
<div class="row " style="top:401px"><div class="c" style="left:0px;width:193px"><span style="letter-spacing:-0.09px">Orderconfirmation</span></div><div class="c" style="left:193px;width:165px">O201902/0055</div><div class="c" style="left:358px;width:102px">2/22/2019</div><div class="c" style="left:460px;width:154px"></div><div class="c" style="left:614px;width:147px">John Doe</div><div class="c" style="left:761px;width:140px">+00 123 456 987</div><div class="c r" style="left:901px;width:102px">11,397.74 €</div><div class="c r" style="left:1003px;width:104px">11,397.74 €</div><div class="c r" style="left:1107px;width:97px">0.00 €</div><div class="c r" style="left:1204px;width:109px">11,397.74 €</div><div class="c" style="left:1313px;width:27px"><div class="cb" style="left:6px"></div></div><div class="c" style="left:1340px;width:37px"><div class="cb" style="left:11px"></div></div></div>
<div class="row " style="top:422px"><div class="c" style="left:0px;width:193px"><span style="letter-spacing:-0.09px">Orderconfirmation</span></div><div class="c" style="left:193px;width:165px">O201902/0054</div><div class="c" style="left:358px;width:102px">2/22/2019</div><div class="c" style="left:460px;width:154px"></div><div class="c" style="left:614px;width:147px">John Doe</div><div class="c" style="left:761px;width:140px">+00 123 456 987</div><div class="c r" style="left:901px;width:102px">13,931.12 €</div><div class="c r" style="left:1003px;width:104px">13,931.12 €</div><div class="c r" style="left:1107px;width:97px">0.00 €</div><div class="c r" style="left:1204px;width:109px">13,931.12 €</div><div class="c" style="left:1313px;width:27px"><div class="cb" style="left:6px"></div></div><div class="c" style="left:1340px;width:37px"><div class="cb" style="left:11px"></div></div></div>
<div class="row red" style="top:443px"><div class="c" style="left:0px;width:193px"><span style="letter-spacing:-0.06px">Invoice</span></div><div class="c" style="left:193px;width:165px">IV201902/0008</div><div class="c" style="left:358px;width:102px">2/21/2019</div><div class="c" style="left:460px;width:154px">RollShutter</div><div class="c" style="left:614px;width:147px">John Doe</div><div class="c" style="left:761px;width:140px">+00 123 456 987</div><div class="c r" style="left:901px;width:102px">2,757.03 €</div><div class="c r" style="left:1003px;width:104px">2,757.03 €</div><div class="c r" style="left:1107px;width:97px">0.00 €</div><div class="c r" style="left:1204px;width:109px">2,757.03 €</div><div class="c" style="left:1313px;width:27px"><div class="cb" style="left:6px"></div></div><div class="c" style="left:1340px;width:37px"><div class="cb" style="left:11px"></div></div></div>
<div class="row grn" style="top:464px"><div class="c" style="left:0px;width:193px"><span style="letter-spacing:-0.06px">Invoice</span></div><div class="c" style="left:193px;width:165px">IV201902/0009</div><div class="c" style="left:358px;width:102px">2/21/2019</div><div class="c" style="left:460px;width:154px">RollShutter</div><div class="c" style="left:614px;width:147px">John Doe</div><div class="c" style="left:761px;width:140px">+00 123 456 987</div><div class="c r" style="left:901px;width:102px">269.11 €</div><div class="c r" style="left:1003px;width:104px">269.11 €</div><div class="c r" style="left:1107px;width:97px">269.11 €</div><div class="c r" style="left:1204px;width:109px">0.00 €</div><div class="c" style="left:1313px;width:27px"><div class="cb ck" style="left:6px"></div></div><div class="c" style="left:1340px;width:37px"><div class="cb" style="left:11px"></div></div></div>
<div class="row " style="top:485px"><div class="c" style="left:0px;width:193px"><span style="letter-spacing:-0.09px">Orderconfirmation</span></div><div class="c" style="left:193px;width:165px">O201812/0049</div><div class="c" style="left:358px;width:102px">12/10/2018</div><div class="c" style="left:460px;width:154px">Demo</div><div class="c" style="left:614px;width:147px">John Doe</div><div class="c" style="left:761px;width:140px">+00 123 456 987</div><div class="c r" style="left:901px;width:102px">450.00 €</div><div class="c r" style="left:1003px;width:104px">535.50 €</div><div class="c r" style="left:1107px;width:97px">0.00 €</div><div class="c r" style="left:1204px;width:109px">535.50 €</div><div class="c" style="left:1313px;width:27px"><div class="cb" style="left:6px"></div></div><div class="c" style="left:1340px;width:37px"><div class="cb" style="left:11px"></div></div></div>
<div class="abs" style="left:1376px;top:23px;width:17px;height:624px;background:#f0f0f0"></div>
<div class="abs" style="left:1377px;top:24px;width:15px;height:16px;background:#fdfdfd;border:1px solid #e4e4e4"><svg class="abs" style="left:3px;top:4px" width="7" height="4"><path d="M0 4H7L3.500 0Z" fill="#c8c8c8"/></svg></div>
<div class="abs" style="left:1377px;top:630px;width:15px;height:16px;background:#fdfdfd;border:1px solid #e4e4e4"><svg class="abs" style="left:3px;top:5px" width="7" height="4"><path d="M0 0H7L3.500 4Z" fill="#c8c8c8"/></svg></div>
<div class="abs" style="left:0;top:647px;width:1393px;height:1px;background:#e8e8e8"></div>
<div class="abs" style="left:0;top:684px;width:1393px;height:1px;background:#e2e2e2"></div>
<div class="abs" style="left:902px;top:654px;width:99px;height:24px;line-height:24px;background:#f4f4f4;text-align:right;padding-right:5px;color:#cfcfcf">207,498.23 €</div>
<div class="abs" style="left:1004px;top:654px;width:102px;height:24px;line-height:24px;background:#f4f4f4;text-align:right;padding-right:5px;color:#cfcfcf">207,583.73 €</div>
<div class="abs" style="left:1205px;top:654px;width:107px;height:24px;line-height:24px;background:#f4f4f4;text-align:right;padding-right:5px;color:#cfcfcf">207,314.62 €</div>
<div class="abs" style="left:0;top:685px;width:1393px;height:32px;background:#f6f6f6"></div>
<div class="cb ck" style="left:7px;top:694px"></div>
<div class="abs" style="right:11px;top:695px;color:#cfcfcf;line-height:14px">Edit Filter</div>
</div>
<div class="abs" style="left:3px;top:872px;width:113px;height:25px;background:#fdfdfd;border-right:1px solid #dcdcdc;border-bottom:2px solid #b4b4b4;color:#3c3c4c;line-height:24px;padding-left:10px">Projects [23 / 312]</div>
<svg class="abs" style="left:1585px;top:884px" width="7" height="4"><path d="M0 0H6L3 3.500Z" fill="#444"/></svg>
<style>
#dlg{position:absolute;left:568px;top:299px;width:465px;height:295px;background:#f8f8f8;border:1px solid #8c8c8c;box-shadow:0 3px 12px rgba(0,0,0,.30),0 0 3px rgba(0,0,0,.15);color:#000;font-size:11px}
#dlg .tb{position:absolute;left:0;top:0;width:463px;height:30px;background:#fff}
#dlg .l{position:absolute;white-space:nowrap;line-height:14px;letter-spacing:-0.47px;font-size:11.5px}
#dlg .chk{position:absolute;left:18px;width:13px;height:13px;border:1px solid #333;background:#fff}
#dlg .num{position:absolute;width:20px;text-align:right;font-weight:bold;color:#1c6fb4;line-height:14px;font-size:12px}
#dlg .cmb{position:absolute;height:21px;background:#e1e1e1;border:1px solid #adadad;line-height:20px;padding-left:3px;white-space:nowrap;letter-spacing:-0.47px;font-size:11.5px}
#dlg .btn{position:absolute;top:259px;height:21px;width:73px;background:#e1e1e1;border:1px solid #adadad;text-align:center;line-height:19px;font-size:11.5px;padding-right:2px}
</style>
<div id="dlg">
 <div class="tb"></div>
 <svg class="abs" style="left:8px;top:7px" width="17" height="17" viewBox="0 0 17 17"><ellipse cx="8.500" cy="8.500" rx="7.800" ry="8" fill="none" stroke="#c0c0c0" stroke-width="1"/><path d="M8.800 1L6.600 16M10.600 1.300L8.400 16.200" stroke="#c0c0c0" stroke-width="0.900" fill="none"/></svg>
 <div class="abs" style="left:29px;top:7px;font-size:12px;line-height:16px;color:#a2a2a2;letter-spacing:0.05px">Dunning run...</div>
 <svg class="abs" style="left:443px;top:9px" width="11" height="11" viewBox="0 0 11 11"><path d="M0.500 0.500L10.500 10.500M10.500 0.500L0.500 10.500" stroke="#666" stroke-width="1"/></svg>
 <!-- groupbox -->
 <div class="abs" style="left:12px;top:48px;width:439px;height:203px;border:1px solid #dcdcdc"></div>
 <div class="l" style="left:19px;top:42px;background:#f8f8f8;padding:0 2px">Select dunning levels</div>
 <div class="chk" style="top:62px"></div><div class="l" style="left:36px;top:62px">Consider dunning level 1</div><div class="l" style="left:342px;top:62px">Total</div><div class="num" style="left:421px;top:62px">2</div>
 <div class="chk" style="top:85px"></div><div class="l" style="left:36px;top:85px">Consider dunning level 2</div><div class="l" style="left:342px;top:85px">Total</div><div class="num" style="left:421px;top:85px">1</div>
 <div class="chk" style="top:108px"></div><div class="l" style="left:36px;top:108px">Consider dunning level 3</div><div class="l" style="left:342px;top:108px">Total</div><div class="num" style="left:421px;top:108px">1</div>
 <div class="chk" style="top:131px"></div><div class="l" style="left:36px;top:131px">consider reminder 3 again</div><div class="l" style="left:342px;top:131px">Total</div><div class="num" style="left:421px;top:131px">0</div>
 <div class="l" style="left:21px;top:169px">Print type</div>
 <div class="l" style="left:21px;top:196px">Output</div>
 <div class="l" style="left:21px;top:223px">Printer</div>
 <div class="cmb" style="left:124px;top:166px;width:191px">Reminders as individual documents</div>
 <div class="cmb" style="left:124px;top:193px;width:321px">Print as documents</div>
 <div class="cmb" style="left:124px;top:220px;width:321px">Adobe PDF</div>
 <svg class="abs" style="left:301px;top:174px" width="9" height="6" viewBox="0 0 9 6"><path d="M0.500 0.500L4.500 4.500L8.500 0.500" fill="none" stroke="#444" stroke-width="1.100"/></svg>
 <svg class="abs" style="left:431px;top:201px" width="9" height="6" viewBox="0 0 9 6"><path d="M0.500 0.500L4.500 4.500L8.500 0.500" fill="none" stroke="#444" stroke-width="1.100"/></svg>
 <svg class="abs" style="left:431px;top:228px" width="9" height="6" viewBox="0 0 9 6"><path d="M0.500 0.500L4.500 4.500L8.500 0.500" fill="none" stroke="#444" stroke-width="1.100"/></svg>
 <div class="l" style="left:344px;top:169px">No. of copies</div>
 <div class="abs" style="left:417px;top:166px;width:28px;height:21px;background:#fff;border:1px solid #adadad;text-align:right;padding-right:3px;line-height:19px">1</div>
 <div class="btn" style="left:13px"><span style="letter-spacing:-0.76px">Show</span></div>
 <div class="btn" style="left:296px;border:2px solid #0078d7;line-height:17px"><div class="abs" style="left:1px;top:1px;width:67px;height:15px;border:1px dotted #000"></div><span style="letter-spacing:-0.74px">Print</span></div>
 <div class="btn" style="left:377px"><span style="letter-spacing:-0.77px">Abort</span></div>
</div>
</body></html>
